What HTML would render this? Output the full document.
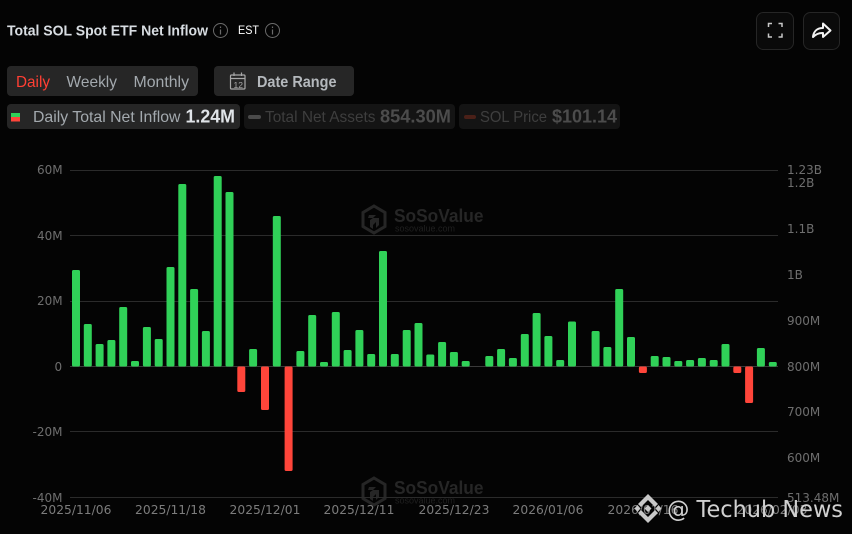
<!DOCTYPE html>
<html><head><meta charset="utf-8"><style>
html,body{margin:0;padding:0;background:#040404;width:852px;height:534px;overflow:hidden}
svg{display:block}
text{font-family:"Liberation Sans",sans-serif}
.d text,text.d{font-family:"DejaVu Sans",sans-serif}
</style></head><body>
<svg width="852" height="534" viewBox="0 0 852 534" xmlns="http://www.w3.org/2000/svg">
<rect width="852" height="534" fill="#040404"/>
<!-- header -->
<text x="7" y="35.500" font-size="15" font-weight="700" fill="#d8dde2" textLength="201" lengthAdjust="spacingAndGlyphs">Total SOL Spot ETF Net Inflow</text>
<g fill="none" stroke="#6b6b6b" stroke-width="1"><circle cx="220.500" cy="30.500" r="7"/><circle cx="272.500" cy="30.500" r="7"/></g>
<g stroke="#6b6b6b" stroke-width="1.200"><path d="M220.500 29.500v5M220.500 26.500v1.500M272.500 29.500v5M272.500 26.500v1.500"/></g>
<text x="238" y="34" font-size="12" fill="#fff" textLength="21" lengthAdjust="spacingAndGlyphs">EST</text>
<rect x="756.500" y="12.500" width="37" height="37" rx="7" fill="#0a0a0a" stroke="#262626"/>
<rect x="803.500" y="12.500" width="36" height="37" rx="7" fill="#0a0a0a" stroke="#262626"/>
<path d="M768.500 27v-3.500h3.500M778.500 23.500h3.500v3.500M782 33.500v3.500h-3.500M772 37h-3.500v-3.500" fill="none" stroke="#c8c8c8" stroke-width="1.500"/>
<path d="M813 37c.5-5.500 4-9 10-9v-4.500l7.500 7-7.500 6.500v-4c-3.500-.2-7 1-10 4z" fill="none" stroke="#f2f2f2" stroke-width="2" stroke-linejoin="round"/>
<!-- controls -->
<rect x="7" y="66" width="191" height="30" rx="4" fill="#262626"/>
<text x="16" y="87" font-size="16" fill="#ff3f34" textLength="34" lengthAdjust="spacingAndGlyphs">Daily</text>
<text x="66.500" y="87" font-size="16" fill="#a3a9ae" textLength="50.500" lengthAdjust="spacingAndGlyphs">Weekly</text>
<text x="133.500" y="87" font-size="16" fill="#a3a9ae" textLength="55.500" lengthAdjust="spacingAndGlyphs">Monthly</text>
<rect x="214" y="66" width="140" height="30" rx="4" fill="#262626"/>
<g fill="none" stroke="#a8a8a8" stroke-width="1.200"><rect x="230.500" y="75" width="14.500" height="14" rx="1"/><path d="M230.500 78.500h14.500M234 72.500v3.500M241.500 72.500v3.500"/></g>
<text x="233.500" y="88" font-size="8.500" fill="#a8a8a8">12</text>
<text x="257" y="87" font-size="16" font-weight="700" fill="#b4b8bc" textLength="79.500" lengthAdjust="spacingAndGlyphs">Date Range</text>
<!-- legend -->
<rect x="7" y="104" width="233" height="25" rx="4" fill="#262626"/>
<rect x="11" y="113" width="9" height="4" fill="#30d158"/><rect x="11" y="117" width="9" height="4.500" fill="#ff453a"/>
<text x="33" y="122" font-size="16" fill="#a3a9ae" textLength="147.500" lengthAdjust="spacingAndGlyphs">Daily Total Net Inflow</text>
<text x="185.500" y="122.500" font-size="18" font-weight="700" fill="#e0e4e8" textLength="49.500" lengthAdjust="spacingAndGlyphs">1.24M</text>
<rect x="244" y="104" width="211" height="25" rx="4" fill="#141414"/>
<rect x="248" y="115" width="13" height="4" rx="2" fill="#4a4a4a"/>
<text x="265" y="122" font-size="16" fill="#3e3e3e" textLength="110.500" lengthAdjust="spacingAndGlyphs">Total Net Assets</text>
<text x="380" y="122.500" font-size="18" font-weight="700" fill="#4c4c4c" textLength="71" lengthAdjust="spacingAndGlyphs">854.30M</text>
<rect x="459" y="104" width="161" height="25" rx="4" fill="#141414"/>
<rect x="464" y="115" width="12" height="4" rx="2" fill="#4a2018"/>
<text x="480" y="122" font-size="16" fill="#3e3e3e" textLength="67" lengthAdjust="spacingAndGlyphs">SOL Price</text>
<text x="552" y="122.500" font-size="18" font-weight="700" fill="#4c4c4c" textLength="65" lengthAdjust="spacingAndGlyphs">$101.14</text>
<!-- watermarks -->
<g fill="#262626">
<path d="M374 206l11 6.500v14l-11 6.500-11-6.500v-14z" fill="none" stroke="#262626" stroke-width="3"/>
<path d="M369 215h7l-3 3h6v7l-3 3v-6l-3 3v4l-3-2v-7l3-2h-5z"/>
<text x="394" y="222" font-size="18" font-weight="700" textLength="89.500" lengthAdjust="spacingAndGlyphs">SoSoValue</text>
<text x="395" y="231.500" font-size="9" fill="#202020" textLength="60" lengthAdjust="spacingAndGlyphs">sosovalue.com</text>
</g>
<g fill="#262626">
<path d="M374 478l11 6.500v14l-11 6.500-11-6.500v-14z" fill="none" stroke="#262626" stroke-width="3"/>
<path d="M369 487h7l-3 3h6v7l-3 3v-6l-3 3v4l-3-2v-7l3-2h-5z"/>
<text x="394" y="494" font-size="18" font-weight="700" textLength="89.500" lengthAdjust="spacingAndGlyphs">SoSoValue</text>
<text x="395" y="503.500" font-size="9" fill="#202020" textLength="60" lengthAdjust="spacingAndGlyphs">sosovalue.com</text>
</g>
<!-- grid -->
<g stroke="#2b2b2b" stroke-width="1"><path d="M70 170.500H778M70 235.500H778M70 301.500H778M70 431.500H778M70 497.500H778"/></g>
<path d="M70 366.500H778" stroke="#3a3a3a" stroke-width="1"/>
<!-- bars -->
<g fill="#30d158">
<rect x="72" y="270" width="8" height="96.500" rx="1.500"/>
<rect x="83.800" y="324" width="8" height="42.500" rx="1.500"/>
<rect x="95.600" y="344" width="8" height="22.500" rx="1.500"/>
<rect x="107.400" y="340" width="8" height="26.500" rx="1.500"/>
<rect x="119.200" y="307" width="8" height="59.500" rx="1.500"/>
<rect x="131" y="361" width="8" height="5.500" rx="1.500"/>
<rect x="142.900" y="327" width="8" height="39.500" rx="1.500"/>
<rect x="154.700" y="339" width="8" height="27.500" rx="1.500"/>
<rect x="166.500" y="267" width="8" height="99.500" rx="1.500"/>
<rect x="178.300" y="184" width="8" height="182.500" rx="1.500"/>
<rect x="190.100" y="289" width="8" height="77.500" rx="1.500"/>
<rect x="201.900" y="331" width="8" height="35.500" rx="1.500"/>
<rect x="213.700" y="176" width="8" height="190.500" rx="1.500"/>
<rect x="225.500" y="192" width="8" height="174.500" rx="1.500"/>
<rect x="249.100" y="349" width="8" height="17.500" rx="1.500"/>
<rect x="272.800" y="216" width="8" height="150.500" rx="1.500"/>
<rect x="296.400" y="351" width="8" height="15.500" rx="1.500"/>
<rect x="308.200" y="315" width="8" height="51.500" rx="1.500"/>
<rect x="320" y="362" width="8" height="4.500" rx="1.500"/>
<rect x="331.800" y="312" width="8" height="54.500" rx="1.500"/>
<rect x="343.600" y="350" width="8" height="16.500" rx="1.500"/>
<rect x="355.400" y="330" width="8" height="36.500" rx="1.500"/>
<rect x="367.200" y="354" width="8" height="12.500" rx="1.500"/>
<rect x="379" y="251" width="8" height="115.500" rx="1.500"/>
<rect x="390.800" y="354" width="8" height="12.500" rx="1.500"/>
<rect x="402.700" y="330" width="8" height="36.500" rx="1.500"/>
<rect x="414.500" y="323" width="8" height="43.500" rx="1.500"/>
<rect x="426.300" y="354.500" width="8" height="12" rx="1.500"/>
<rect x="438.100" y="342" width="8" height="24.500" rx="1.500"/>
<rect x="449.900" y="352" width="8" height="14.500" rx="1.500"/>
<rect x="461.700" y="361" width="8" height="5.500" rx="1.500"/>
<rect x="485.300" y="356" width="8" height="10.500" rx="1.500"/>
<rect x="497.100" y="349" width="8" height="17.500" rx="1.500"/>
<rect x="508.900" y="358" width="8" height="8.500" rx="1.500"/>
<rect x="520.800" y="334" width="8" height="32.500" rx="1.500"/>
<rect x="532.600" y="313" width="8" height="53.500" rx="1.500"/>
<rect x="544.400" y="336" width="8" height="30.500" rx="1.500"/>
<rect x="556.200" y="360" width="8" height="6.500" rx="1.500"/>
<rect x="568" y="321.500" width="8" height="45" rx="1.500"/>
<rect x="591.600" y="331" width="8" height="35.500" rx="1.500"/>
<rect x="603.400" y="347" width="8" height="19.500" rx="1.500"/>
<rect x="615.200" y="289" width="8" height="77.500" rx="1.500"/>
<rect x="627" y="337" width="8" height="29.500" rx="1.500"/>
<rect x="650.700" y="356" width="8" height="10.500" rx="1.500"/>
<rect x="662.500" y="357" width="8" height="9.500" rx="1.500"/>
<rect x="674.300" y="361" width="8" height="5.500" rx="1.500"/>
<rect x="686.100" y="360" width="8" height="6.500" rx="1.500"/>
<rect x="697.900" y="358" width="8" height="8.500" rx="1.500"/>
<rect x="709.700" y="360" width="8" height="6.500" rx="1.500"/>
<rect x="721.500" y="344" width="8" height="22.500" rx="1.500"/>
<rect x="756.900" y="348" width="8" height="18.500" rx="1.500"/>
<rect x="768.800" y="362" width="8" height="4.500" rx="1.500"/>
</g>
<g fill="#ff453a">
<rect x="237.300" y="366.500" width="8" height="25.500" rx="1.500"/>
<rect x="261" y="366.500" width="8" height="43.500" rx="1.500"/>
<rect x="284.600" y="366.500" width="8" height="104.500" rx="1.500"/>
<rect x="638.900" y="366.500" width="8" height="6.500" rx="1.500"/>
<rect x="733.300" y="366.500" width="8" height="6.500" rx="1.500"/>
<rect x="745.100" y="366.500" width="8" height="36.500" rx="1.500"/>
</g>
<!-- axis labels -->
<g class="d" font-size="12" fill="#6e6e6e">
<text x="37" y="174">60M</text><text x="37" y="240">40M</text><text x="37" y="305">20M</text>
<text x="54.500" y="371">0</text><text x="32.500" y="436">-20M</text><text x="32.500" y="502">-40M</text>
<text x="787" y="174">1.23B</text><text x="787" y="187">1.2B</text><text x="787" y="233">1.1B</text>
<text x="787" y="279">1B</text><text x="787" y="325">900M</text><text x="787" y="371">800M</text>
<text x="787" y="416">700M</text><text x="787" y="462">600M</text><text x="787" y="502">513.48M</text>
</g>
<g class="d" font-size="12.300" fill="#7c7c7c" text-anchor="middle">
<text x="76" y="514">2025/11/06</text><text x="170.500" y="514">2025/11/18</text><text x="265" y="514">2025/12/01</text>
<text x="359" y="514">2025/12/11</text><text x="454" y="514">2025/12/23</text><text x="548" y="514">2026/01/06</text>
<text x="643" y="514">2026/01/16</text><text x="772" y="514">2026/02/03</text>
</g>
<!-- Techub overlay -->
<path d="M648 494l10 10-3 3-7-7-7 7-3-3zM648 523l10-10-3-3-7 7-7-7-3 3z" fill="#c8c8c8"/>
<path d="M648 505l3.500 3.500-3.500 3.500-3.500-3.500zM637.500 505l3 3.500-3 3.500-3-3.500zM658.500 505l3 3.500-3 3.500-3-3.500z" fill="#c8c8c8"/>
<text class="d" x="667" y="517" font-size="23" fill="#d0d0d0" textLength="176" lengthAdjust="spacingAndGlyphs">@ Techub News</text>
</svg>
</body></html>
